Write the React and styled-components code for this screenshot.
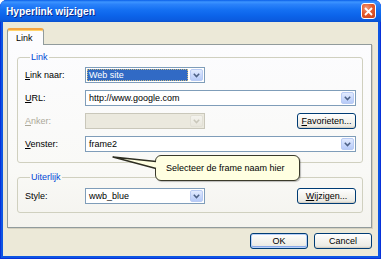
import React from "react";
import styled, { createGlobalStyle } from "styled-components";

const Global = createGlobalStyle`
  html, body { margin: 0; padding: 0; background: #ffffff; }
  body { font-family: "Liberation Sans", Arial, sans-serif; font-size: 9px; color: #000; }
  * { box-sizing: border-box; }
`;

const Win = styled.div`
  position: relative;
  width: 381px;
  height: 259px;
  display: flex;
  flex-direction: column;
  background: #0D55E3;
  box-shadow: inset 1px 0 0 #0831D9, inset -1px 0 0 #0831D9, inset 0 -1px 0 #0831D9;
  border-radius: 7px 7px 0 0;
  overflow: hidden;
`;

const TitleBar = styled.div`
  height: 22px;
  flex: none;
  display: flex;
  align-items: center;
  justify-content: space-between;
  padding: 0 5px 0 6px;
  background: linear-gradient(
    to bottom,
    #0A5FE8 0%,
    #3D95FF 9%,
    #2A82FA 20%,
    #1470F2 45%,
    #0C64EA 70%,
    #0B5CE0 90%,
    #0A50CE 100%
  );
`;

const Title = styled.span`
  color: #ffffff;
  font-weight: bold;
  font-size: 10.2px;
  text-shadow: 1px 1px 0 #0A2C8C;
`;

const CloseBtn = styled.div`
  width: 15px;
  height: 16px;
  border: 1px solid #ffffff;
  border-radius: 3px;
  background: radial-gradient(circle at 35% 30%, #F29B7A 0%, #E35A2C 45%, #C8401A 100%);
  display: flex;
  align-items: center;
  justify-content: center;
`;

const Body = styled.div`
  flex: 1;
  margin: 0 3px 3px 3px;
  background: #ECE9D8;
  padding: 6px 6px 0 4px;
  display: flex;
  flex-direction: column;
`;

const TabStrip = styled.div`
  display: flex;
  height: 17px;
  position: relative;
  z-index: 1;
`;

const Tab = styled.div`
  width: 37px;
  height: 17px;
  border: 1px solid #919B9C;
  border-bottom: none;
  border-top: 2px solid #F5A540;
  border-radius: 3px 3px 0 0;
  background: #FCFCFE;
  padding-left: 8px;
  display: flex;
  align-items: center;
  font-size: 9px;
  box-shadow: inset 0 1px 0 #FFD36A;
`;

const Panel = styled.div`
  height: 184px;
  margin-top: -1px;
  border: 1px solid #919B9C;
  background: linear-gradient(to bottom, #FCFCFE 0%, #F9F9F6 70%, #F4F3EE 100%);
  box-shadow: 1px 1px 0 #D4D0C0;
  padding: 6px 8px 0 9px;
  display: flex;
  flex-direction: column;
`;

const Group = styled.fieldset`
  margin: ${(p) => (p.$first ? "0" : "8px")} 0 0 0;
  padding: ${(p) => p.$pt}px 6px ${(p) => p.$pb}px 7px;
  border: 1px solid #D0D0BF;
  border-radius: 3px;
  min-width: 0;
`;

const Legend = styled.legend`
  color: #0046D5;
  font-size: 9px;
  line-height: 12px;
  padding: 0 1px;
  margin-left: 5px;
`;

const Rows = styled.div`
  display: flex;
  flex-direction: column;
  gap: 7px;
`;

const Row = styled.div`
  display: flex;
  align-items: center;
  height: 16px;
`;

const Label = styled.div`
  width: 60px;
  flex: none;
  color: ${(p) => (p.$disabled ? "#ACA899" : "#000")};
  font-size: 9px;
  u { text-decoration: underline; }
`;

const Combo = styled.div`
  width: ${(p) => (p.$w ? `${p.$w}px` : "auto")};
  flex: ${(p) => (p.$w ? "none" : "1")};
  height: 16px;
  border: 1px solid ${(p) => (p.$disabled ? "#C9C7BA" : "#7F9DB9")};
  background: ${(p) => (p.$disabled ? "#EBE9DE" : "#ffffff")};
  display: flex;
  align-items: center;
  padding: 1px;
`;

const Value = styled.div`
  flex: 1;
  height: 100%;
  display: flex;
  align-items: center;
  padding-left: 2px;
  font-size: 9px;
  white-space: nowrap;
  overflow: hidden;
`;

const Selected = styled.div`
  flex: 1;
  height: 100%;
  margin-right: 2px;
  display: flex;
  align-items: center;
  padding-left: 2px;
  background: #316AC5;
  color: #ffffff;
  outline: 1px dotted #C9B87A;
  outline-offset: -1px;
  font-size: 9px;
`;

const DropBtn = styled.div`
  width: 13px;
  height: 100%;
  flex: none;
  border: 1px solid ${(p) => (p.$disabled ? "#E2E0D6" : "#B9CBF3")};
  border-radius: 2px;
  background: ${(p) =>
    p.$disabled
      ? "linear-gradient(to bottom, #F4F3EE, #E8E6DC)"
      : "linear-gradient(to bottom, #E2EBFE 0%, #CBDAFC 50%, #B7CBF8 100%)"};
  display: flex;
  align-items: center;
  justify-content: center;
`;

const XPButton = styled.div`
  width: ${(p) => p.$w}px;
  height: 16px;
  flex: none;
  margin-left: ${(p) => (p.$push ? "auto" : "0")};
  border: 1px solid #003C74;
  border-radius: 3px;
  background: linear-gradient(to bottom, #FFFFFF 0%, #F6F5F1 40%, #ECEBE5 85%, #D8D5C8 100%);
  box-shadow: ${(p) =>
    p.$default ? "inset 0 0 0 1px #B8D0F8, inset 0 -1px 0 1px #88A8E8" : "inset 0 -1px 0 #D6D0C5"};
  display: flex;
  align-items: center;
  justify-content: center;
  font-size: 9px;
  color: #000;
  u { text-decoration: underline; }
`;

const Footer = styled.div`
  display: flex;
  justify-content: flex-end;
  gap: 6px;
  margin-top: 5px;
`;

const Balloon = styled.div`
  position: absolute;
  left: 155px;
  top: 155px;
  width: 145px;
  height: 26px;
  background: #FFFFE1;
  border: 1px solid #3A3A2A;
  border-radius: 6px;
  display: flex;
  align-items: center;
  padding-left: 10px;
  font-size: 9px;
  z-index: 3;
  box-shadow: 1px 1px 1px rgba(0, 0, 0, 0.25);
`;

const Pointer = styled.svg`
  position: absolute;
  left: 110px;
  top: 153px;
  z-index: 4;
`;

const Chevron = ({ disabled }) => (
  <svg width="7" height="5" viewBox="0 0 7 5">
    <path
      d="M0.8 0.8 L3.5 3.6 L6.2 0.8"
      fill="none"
      stroke={disabled ? "#C9C7BA" : "#4D6185"}
      strokeWidth="1.5"
    />
  </svg>
);

export default function App() {
  return (
    <>
      <Global />
      <Win>
        <TitleBar>
          <Title>Hyperlink wijzigen</Title>
          <CloseBtn>
            <svg width="9" height="9" viewBox="0 0 9 9">
              <path d="M1 1 L8 8 M8 1 L1 8" stroke="#ffffff" strokeWidth="1.8" />
            </svg>
          </CloseBtn>
        </TitleBar>
        <Body>
          <TabStrip>
            <Tab>Link</Tab>
          </TabStrip>
          <Panel>
            <Group $first $pt={4} $pb={10}>
              <Legend>Link</Legend>
              <Rows>
                <Row>
                  <Label>
                    <u>L</u>ink naar:
                  </Label>
                  <Combo $w={120}>
                    <Selected>Web site</Selected>
                    <DropBtn>
                      <Chevron />
                    </DropBtn>
                  </Combo>
                </Row>
                <Row>
                  <Label>
                    <u>U</u>RL:
                  </Label>
                  <Combo>
                    <Value>http://www.google.com</Value>
                    <DropBtn>
                      <Chevron />
                    </DropBtn>
                  </Combo>
                </Row>
                <Row>
                  <Label $disabled>
                    <u>A</u>nker:
                  </Label>
                  <Combo $w={120} $disabled>
                    <Value />
                    <DropBtn $disabled>
                      <Chevron disabled />
                    </DropBtn>
                  </Combo>
                  <XPButton $w={59} $push>
                    <span>
                      <u>F</u>avorieten...
                    </span>
                  </XPButton>
                </Row>
                <Row>
                  <Label>
                    <u>V</u>enster:
                  </Label>
                  <Combo>
                    <Value>frame2</Value>
                    <DropBtn>
                      <Chevron />
                    </DropBtn>
                  </Combo>
                </Row>
              </Rows>
            </Group>
            <Group $pt={5} $pb={8}>
              <Legend>Uiterlijk</Legend>
              <Row>
                <Label>Style:</Label>
                <Combo $w={120}>
                  <Value>wwb_blue</Value>
                  <DropBtn>
                    <Chevron />
                  </DropBtn>
                </Combo>
                <XPButton $w={59} $push>
                  <span>
                    <u>W</u>ijzigen...
                  </span>
                </XPButton>
              </Row>
            </Group>
          </Panel>
          <Footer>
            <XPButton $w={58} $default>
              OK
            </XPButton>
            <XPButton $w={58}>Cancel</XPButton>
          </Footer>
        </Body>
        <Pointer width="50" height="20" viewBox="0 0 50 20">
          <polygon points="3,4 47,8 47,16" fill="#FFFFE1" />
          <path d="M46 8.5 L3 4 L46 15.5" fill="none" stroke="#2E2E22" strokeWidth="1.3" strokeLinejoin="round" />
        </Pointer>
        <Balloon>Selecteer de frame naam hier</Balloon>
      </Win>
    </>
  );
}
